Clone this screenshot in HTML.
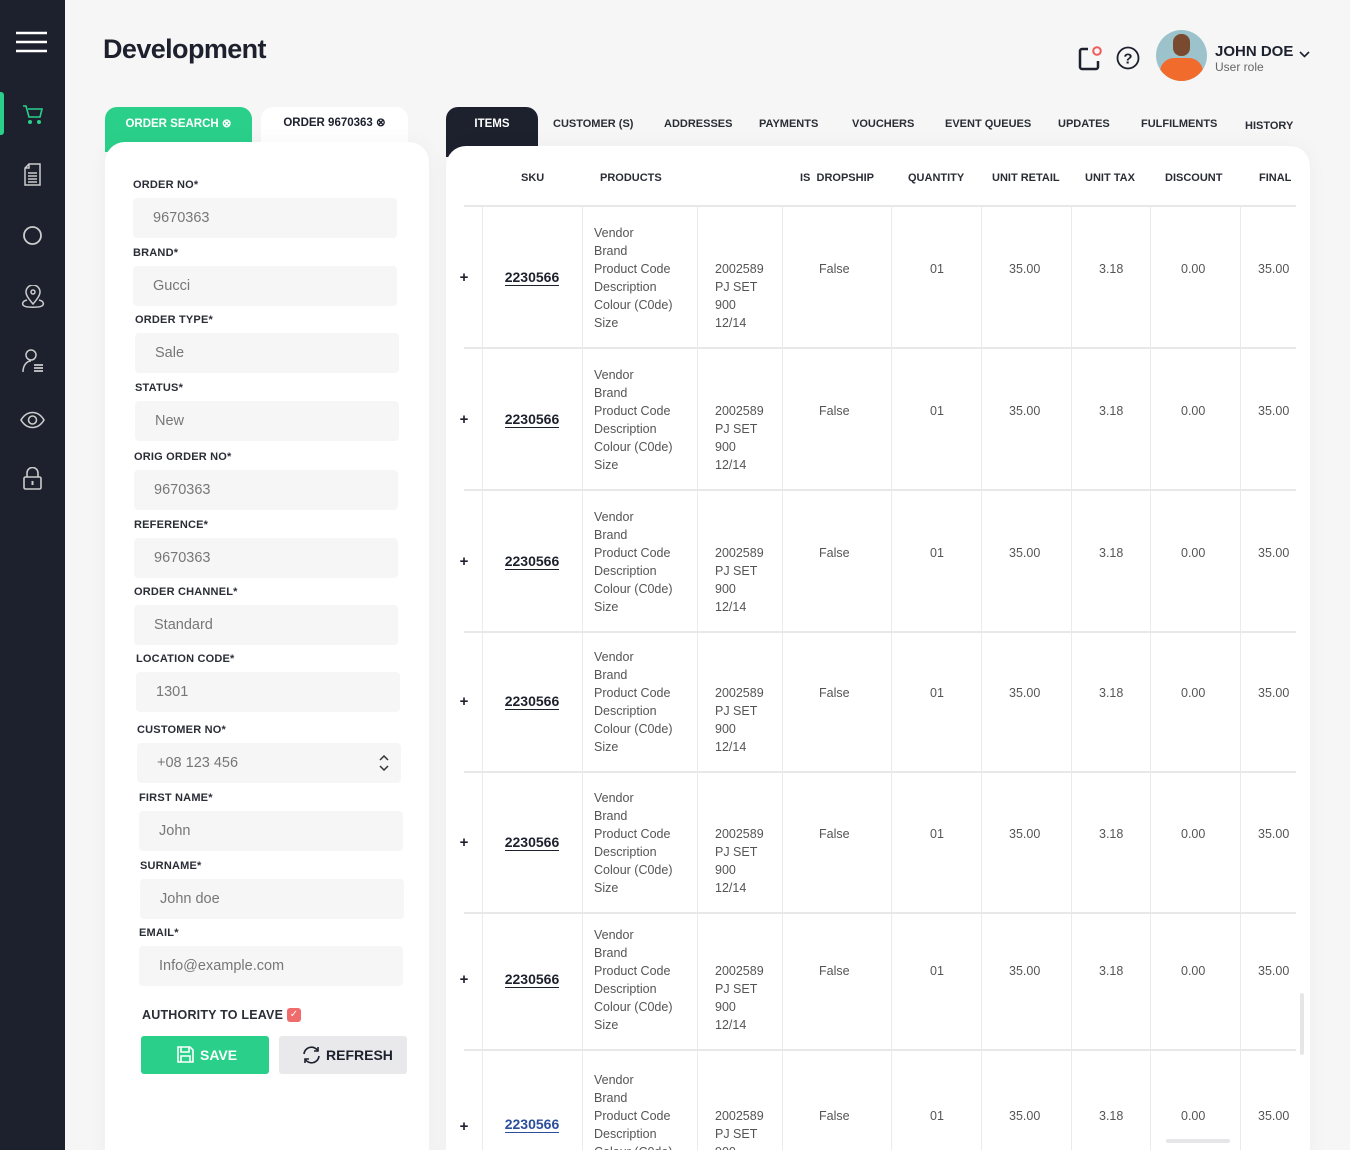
<!DOCTYPE html>
<html style="width:1350px;height:1150px;overflow:hidden"><head><meta charset="utf-8"><style>
*{box-sizing:border-box;margin:0;padding:0}
body{width:1350px;height:1150px;overflow:hidden;background:#f6f6f6;font-family:"Liberation Sans",sans-serif;color:#1d212d;position:relative}
.sb{position:absolute;left:0;top:0;width:65px;height:1150px;background:#1d212d}
.sb svg{position:absolute;left:20px}
.abs{position:absolute}
h1{position:absolute;left:103px;top:34px;font-size:27px;font-weight:700;letter-spacing:-0.6px}
.tab{position:absolute;font-size:11.5px;font-weight:700;text-align:center;line-height:35px;border-radius:12px 12px 0 0}
.card{position:absolute;background:#fff;border-radius:20px;box-shadow:0 0 20px rgba(0,0,0,0.04)}
.lb{position:absolute;font-size:11px;font-weight:700;color:#2a2d36;letter-spacing:0.2px}
.in{position:absolute;width:264px;height:40px;background:#f6f6f6;border-radius:4px;font-size:14.5px;color:#777;line-height:40px;padding-left:20px}
.tt{position:absolute;top:118px;font-size:11px;font-weight:700;color:#2a2d36}
.th{position:absolute;top:172px;font-size:11px;color:#2a2d36;font-weight:600}
.row{position:absolute;left:464px;width:832px;border-bottom:2px solid #e8e8e8;font-size:12.5px;color:#555}
.c{position:absolute;top:0;bottom:0;border-left:1px solid #ebebeb}
.pl{position:absolute;left:455px;width:18px;text-align:center;font-weight:700;font-size:15px;color:#1d212d}
.sku{position:absolute;left:482px;width:100px;text-align:center;font-weight:700;font-size:14px;color:#1d212d}
.sku span{border-bottom:1.5px solid #1d212d}
.pr{position:absolute;left:594px;line-height:18px;color:#555}
.v{position:absolute;line-height:18px;text-align:center}
.clip{position:absolute;left:0;top:0;width:1350px;height:1150px;overflow:hidden}
</style></head><body><div class="clip">
<div class="sb">
<svg style="top:31px;left:16px" width="31" height="22"><g stroke="#fff" stroke-width="2.5"><line x1="0" y1="2" x2="31" y2="2"/><line x1="0" y1="11" x2="31" y2="11"/><line x1="0" y1="20" x2="31" y2="20"/></g></svg>
<div class="abs" style="left:0;top:92px;width:4px;height:43px;background:#2ad08a;border-radius:0 3px 3px 0"></div>
<svg style="top:104px;left:22px" width="22" height="22" fill="none" stroke="#2ad08a" stroke-width="1.6"><path d="M1 2h3l3 11h11l2-8H6"/><circle cx="8" cy="18" r="1.2" fill="#2ad08a"/><circle cx="17" cy="18" r="1.2" fill="#2ad08a"/></svg>
<svg style="top:163px;left:23px" width="20" height="24" fill="none" stroke="#ccc" stroke-width="1.5"><path d="M6 1h11v21H2V5z M6 1v4H2"/><path d="M5 10h9M5 13h9M5 16h9M5 19h9"/></svg>
<svg style="top:225px;left:22px" width="21" height="21" fill="none" stroke="#ccc" stroke-width="1.8"><circle cx="10.5" cy="10.5" r="8.5"/></svg>
<svg style="top:285px;left:21px" width="24" height="26" fill="none" stroke="#ccc" stroke-width="1.5"><path d="M12 19c-5-6-7-9-7-12a7 7 0 0 1 14 0c0 3-2 6-7 12z"/><circle cx="12" cy="7" r="2"/><path d="M6 15c-4 1-5 3-4 5 2 3 18 3 20 0 1-2 0-4-4-5"/></svg>
<svg style="top:348px;left:21px" width="24" height="26" fill="none" stroke="#ccc" stroke-width="1.5"><circle cx="10" cy="7" r="5"/><path d="M2 24c0-7 4-11 8-11"/><path d="M13 17h9M13 20h9M13 23h9" stroke-width="1.8"/></svg>
<svg style="top:410px;left:20px" width="25" height="20" fill="none" stroke="#ccc" stroke-width="1.6"><path d="M1 10c6-10 17-10 23 0-6 10-17 10-23 0z"/><circle cx="12.5" cy="10" r="4"/></svg>
<svg style="top:467px;left:23px" width="20" height="24" fill="none" stroke="#ccc" stroke-width="1.6"><rect x="1" y="10" width="17" height="12" rx="1.5"/><path d="M4 10V6a5.5 5.5 0 0 1 11 0v4"/><path d="M9.5 14v4" stroke-width="2"/></svg>
</div>
<h1>Development</h1>
<svg class="abs" style="left:1078px;top:45px" width="26" height="26" fill="none"><path d="M10 4H4a2 2 0 0 0-2 2v16a2 2 0 0 0 2 2h14a2 2 0 0 0 2-2v-6" stroke="#1d212d" stroke-width="2.5"/><circle cx="19" cy="6" r="3.8" stroke="#f05a5a" stroke-width="2"/></svg>
<svg class="abs" style="left:1116px;top:46px" width="24" height="24" fill="none"><circle cx="12" cy="12" r="10.5" stroke="#1d212d" stroke-width="1.8"/><text x="12" y="17.5" text-anchor="middle" font-size="15" font-weight="700" fill="#1d212d" font-family="Liberation Sans">?</text></svg>
<div class="abs" style="left:1156px;top:30px;width:51px;height:51px;border-radius:50%;background:#9cc3cc;overflow:hidden"><div class="abs" style="left:4px;top:28px;width:43px;height:30px;background:#f06b2c;border-radius:14px 14px 0 0"></div><div class="abs" style="left:17px;top:4px;width:17px;height:22px;background:#7a4a30;border-radius:8px"></div></div>
<div class="abs" style="left:1215px;top:43px;font-size:15px;font-weight:700">JOHN DOE</div>
<div class="abs" style="left:1215px;top:60px;font-size:12px;color:#666">User role</div>
<svg class="abs" style="left:1299px;top:51px" width="11" height="8" fill="none" stroke="#1d212d" stroke-width="1.6"><path d="M1 1l4.5 4.5L10 1"/></svg>

<div class="tab" style="left:105px;top:107px;width:147px;height:45px;background:#2ad08a;color:#fff">ORDER SEARCH &#8855;</div>
<div class="tab" style="left:261px;top:107px;width:147px;height:40px;background:#fff;line-height:33px">ORDER 9670363 &#8855;</div>
<div class="card" style="left:105px;top:142px;width:324px;height:1060px"></div>
<div class="lb" style="left:133px;top:179px">ORDER NO*</div><div class="in" style="left:133px;top:198px">9670363</div>
<div class="lb" style="left:133px;top:247px">BRAND*</div><div class="in" style="left:133px;top:266px">Gucci</div>
<div class="lb" style="left:135px;top:314px">ORDER TYPE*</div><div class="in" style="left:135px;top:333px">Sale</div>
<div class="lb" style="left:135px;top:382px">STATUS*</div><div class="in" style="left:135px;top:401px">New</div>
<div class="lb" style="left:134px;top:451px">ORIG ORDER NO*</div><div class="in" style="left:134px;top:470px">9670363</div>
<div class="lb" style="left:134px;top:519px">REFERENCE*</div><div class="in" style="left:134px;top:538px">9670363</div>
<div class="lb" style="left:134px;top:586px">ORDER CHANNEL*</div><div class="in" style="left:134px;top:605px">Standard</div>
<div class="lb" style="left:136px;top:653px">LOCATION CODE*</div><div class="in" style="left:136px;top:672px">1301</div>
<div class="lb" style="left:137px;top:724px">CUSTOMER NO*</div><div class="in" style="left:137px;top:743px">+08 123 456<svg class="abs" style="left:242px;top:12px" width="10" height="16" fill="none" stroke="#333" stroke-width="1.5"><path d="M1 5l4-4 4 4M1 11l4 4 4-4"/></svg></div>
<div class="lb" style="left:139px;top:792px">FIRST NAME*</div><div class="in" style="left:139px;top:811px">John</div>
<div class="lb" style="left:140px;top:860px">SURNAME*</div><div class="in" style="left:140px;top:879px">John doe</div>
<div class="lb" style="left:139px;top:927px">EMAIL*</div><div class="in" style="left:139px;top:946px">Info@example.com</div>
<div class="lb" style="left:142px;top:1008px;font-size:12.5px">AUTHORITY TO LEAVE</div>
<div class="abs" style="left:287px;top:1008px;width:14px;height:14px;background:#f06b6b;border-radius:3px;color:#fff;font-size:10px;text-align:center;line-height:14px">&#10003;</div>
<div class="abs" style="left:141px;top:1036px;width:128px;height:38px;background:#2ad08a;border-radius:3px;color:#fff;font-weight:700;font-size:14px;line-height:38px;padding-left:59px">SAVE<svg class="abs" style="left:36px;top:10px" width="17" height="17" fill="none" stroke="#fff" stroke-width="1.6"><path d="M1 1h12l3 3v12H1z M4 1v5h8V1 M4 16v-6h9v6"/></svg></div>
<div class="abs" style="left:279px;top:1036px;width:128px;height:38px;background:#e9e9ec;border-radius:3px;color:#1d212d;font-weight:700;font-size:14px;line-height:38px;padding-left:47px">REFRESH<svg class="abs" style="left:23px;top:10px" width="19" height="18" fill="none" stroke="#1d212d" stroke-width="1.6"><path d="M2 8a7.5 7.5 0 0 1 14-3M17 10a7.5 7.5 0 0 1-14 3"/><path d="M16 1v4h-4M3 17v-4h4"/></svg></div>

<div class="tab" style="left:446px;top:107px;width:92px;height:50px;background:#1d212d;color:#fff">ITEMS</div>
<div class="tt" style="left:553px">CUSTOMER (S)</div>
<div class="tt" style="left:664px">ADDRESSES</div>
<div class="tt" style="left:759px">PAYMENTS</div>
<div class="tt" style="left:852px">VOUCHERS</div>
<div class="tt" style="left:945px">EVENT QUEUES</div>
<div class="tt" style="left:1058px">UPDATES</div>
<div class="tt" style="left:1141px">FULFILMENTS</div>
<div class="tt" style="left:1245px;top:120px">HISTORY</div>
<div class="card" style="left:446px;top:146px;width:864px;height:1060px"></div>
<div class="th" style="left:521px">SKU</div>
<div class="th" style="left:600px">PRODUCTS</div>
<div class="th" style="left:800px">IS &nbsp;DROPSHIP</div>
<div class="th" style="left:908px">QUANTITY</div>
<div class="th" style="left:992px">UNIT RETAIL</div>
<div class="th" style="left:1085px">UNIT TAX</div>
<div class="th" style="left:1165px">DISCOUNT</div>
<div class="th" style="left:1259px">FINAL</div>
<div class="abs" style="left:464px;top:205px;width:832px;height:2px;background:#e8e8e8"></div>

<div class="row" style="top:207px;height:142px">
<div class="c" style="left:18px"></div><div class="c" style="left:118px"></div><div class="c" style="left:233px"></div><div class="c" style="left:318px"></div><div class="c" style="left:427px"></div><div class="c" style="left:517px"></div><div class="c" style="left:607px"></div><div class="c" style="left:686px"></div><div class="c" style="left:776px"></div></div>
<div class="row" style="top:349px;height:142px">
<div class="c" style="left:18px"></div><div class="c" style="left:118px"></div><div class="c" style="left:233px"></div><div class="c" style="left:318px"></div><div class="c" style="left:427px"></div><div class="c" style="left:517px"></div><div class="c" style="left:607px"></div><div class="c" style="left:686px"></div><div class="c" style="left:776px"></div></div>
<div class="row" style="top:491px;height:142px">
<div class="c" style="left:18px"></div><div class="c" style="left:118px"></div><div class="c" style="left:233px"></div><div class="c" style="left:318px"></div><div class="c" style="left:427px"></div><div class="c" style="left:517px"></div><div class="c" style="left:607px"></div><div class="c" style="left:686px"></div><div class="c" style="left:776px"></div></div>
<div class="row" style="top:633px;height:140px">
<div class="c" style="left:18px"></div><div class="c" style="left:118px"></div><div class="c" style="left:233px"></div><div class="c" style="left:318px"></div><div class="c" style="left:427px"></div><div class="c" style="left:517px"></div><div class="c" style="left:607px"></div><div class="c" style="left:686px"></div><div class="c" style="left:776px"></div></div>
<div class="row" style="top:773px;height:141px">
<div class="c" style="left:18px"></div><div class="c" style="left:118px"></div><div class="c" style="left:233px"></div><div class="c" style="left:318px"></div><div class="c" style="left:427px"></div><div class="c" style="left:517px"></div><div class="c" style="left:607px"></div><div class="c" style="left:686px"></div><div class="c" style="left:776px"></div></div>
<div class="row" style="top:914px;height:137px">
<div class="c" style="left:18px"></div><div class="c" style="left:118px"></div><div class="c" style="left:233px"></div><div class="c" style="left:318px"></div><div class="c" style="left:427px"></div><div class="c" style="left:517px"></div><div class="c" style="left:607px"></div><div class="c" style="left:686px"></div><div class="c" style="left:776px"></div></div>
<div class="row" style="top:1051px;height:99px;border-bottom:none">
<div class="c" style="left:18px"></div><div class="c" style="left:118px"></div><div class="c" style="left:233px"></div><div class="c" style="left:318px"></div><div class="c" style="left:427px"></div><div class="c" style="left:517px"></div><div class="c" style="left:607px"></div><div class="c" style="left:686px"></div><div class="c" style="left:776px"></div></div>
<div class="abs" style="left:1300px;top:993px;width:4px;height:62px;background:#e6e6e8;border-radius:2px"></div>
<div class="abs" style="left:1166px;top:1139px;width:64px;height:4px;background:#e6e6e8;border-radius:2px"></div>

<div style="position:absolute;left:0;top:224px;width:1350px;font-size:12.5px;color:#555">
<div class="pl" style="top:45px">+</div><div class="sku" style="top:45px"><span>2230566</span></div>
<div class="pr" style="top:0">Vendor<br>Brand<br>Product Code<br>Description<br>Colour (C0de)<br>Size</div>
<div class="pr" style="left:715px;top:36px">2002589<br>PJ SET<br>900<br>12/14</div>
<div class="v" style="left:819px;top:36px">False</div><div class="v" style="left:930px;top:36px">01</div><div class="v" style="left:1009px;top:36px">35.00</div><div class="v" style="left:1099px;top:36px">3.18</div><div class="v" style="left:1181px;top:36px">0.00</div><div class="v" style="left:1258px;top:36px">35.00</div></div>
<div style="position:absolute;left:0;top:366px;width:1350px;font-size:12.5px;color:#555">
<div class="pl" style="top:45px">+</div><div class="sku" style="top:45px"><span>2230566</span></div>
<div class="pr" style="top:0">Vendor<br>Brand<br>Product Code<br>Description<br>Colour (C0de)<br>Size</div>
<div class="pr" style="left:715px;top:36px">2002589<br>PJ SET<br>900<br>12/14</div>
<div class="v" style="left:819px;top:36px">False</div><div class="v" style="left:930px;top:36px">01</div><div class="v" style="left:1009px;top:36px">35.00</div><div class="v" style="left:1099px;top:36px">3.18</div><div class="v" style="left:1181px;top:36px">0.00</div><div class="v" style="left:1258px;top:36px">35.00</div></div>
<div style="position:absolute;left:0;top:508px;width:1350px;font-size:12.5px;color:#555">
<div class="pl" style="top:45px">+</div><div class="sku" style="top:45px"><span>2230566</span></div>
<div class="pr" style="top:0">Vendor<br>Brand<br>Product Code<br>Description<br>Colour (C0de)<br>Size</div>
<div class="pr" style="left:715px;top:36px">2002589<br>PJ SET<br>900<br>12/14</div>
<div class="v" style="left:819px;top:36px">False</div><div class="v" style="left:930px;top:36px">01</div><div class="v" style="left:1009px;top:36px">35.00</div><div class="v" style="left:1099px;top:36px">3.18</div><div class="v" style="left:1181px;top:36px">0.00</div><div class="v" style="left:1258px;top:36px">35.00</div></div>
<div style="position:absolute;left:0;top:648px;width:1350px;font-size:12.5px;color:#555">
<div class="pl" style="top:45px">+</div><div class="sku" style="top:45px"><span>2230566</span></div>
<div class="pr" style="top:0">Vendor<br>Brand<br>Product Code<br>Description<br>Colour (C0de)<br>Size</div>
<div class="pr" style="left:715px;top:36px">2002589<br>PJ SET<br>900<br>12/14</div>
<div class="v" style="left:819px;top:36px">False</div><div class="v" style="left:930px;top:36px">01</div><div class="v" style="left:1009px;top:36px">35.00</div><div class="v" style="left:1099px;top:36px">3.18</div><div class="v" style="left:1181px;top:36px">0.00</div><div class="v" style="left:1258px;top:36px">35.00</div></div>
<div style="position:absolute;left:0;top:789px;width:1350px;font-size:12.5px;color:#555">
<div class="pl" style="top:45px">+</div><div class="sku" style="top:45px"><span>2230566</span></div>
<div class="pr" style="top:0">Vendor<br>Brand<br>Product Code<br>Description<br>Colour (C0de)<br>Size</div>
<div class="pr" style="left:715px;top:36px">2002589<br>PJ SET<br>900<br>12/14</div>
<div class="v" style="left:819px;top:36px">False</div><div class="v" style="left:930px;top:36px">01</div><div class="v" style="left:1009px;top:36px">35.00</div><div class="v" style="left:1099px;top:36px">3.18</div><div class="v" style="left:1181px;top:36px">0.00</div><div class="v" style="left:1258px;top:36px">35.00</div></div>
<div style="position:absolute;left:0;top:926px;width:1350px;font-size:12.5px;color:#555">
<div class="pl" style="top:45px">+</div><div class="sku" style="top:45px"><span>2230566</span></div>
<div class="pr" style="top:0">Vendor<br>Brand<br>Product Code<br>Description<br>Colour (C0de)<br>Size</div>
<div class="pr" style="left:715px;top:36px">2002589<br>PJ SET<br>900<br>12/14</div>
<div class="v" style="left:819px;top:36px">False</div><div class="v" style="left:930px;top:36px">01</div><div class="v" style="left:1009px;top:36px">35.00</div><div class="v" style="left:1099px;top:36px">3.18</div><div class="v" style="left:1181px;top:36px">0.00</div><div class="v" style="left:1258px;top:36px">35.00</div></div>
<div style="position:absolute;left:0;top:1071px;width:1350px;font-size:12.5px;color:#555">
<div class="pl" style="top:47px">+</div><div class="sku" style="top:45px;color:#2b4f9a"><span style="border-color:#2b4f9a">2230566</span></div>
<div class="pr" style="top:0">Vendor<br>Brand<br>Product Code<br>Description<br>Colour (C0de)<br>Size</div>
<div class="pr" style="left:715px;top:36px">2002589<br>PJ SET<br>900<br>12/14</div>
<div class="v" style="left:819px;top:36px">False</div><div class="v" style="left:930px;top:36px">01</div><div class="v" style="left:1009px;top:36px">35.00</div><div class="v" style="left:1099px;top:36px">3.18</div><div class="v" style="left:1181px;top:36px">0.00</div><div class="v" style="left:1258px;top:36px">35.00</div></div>
</div></body></html>
